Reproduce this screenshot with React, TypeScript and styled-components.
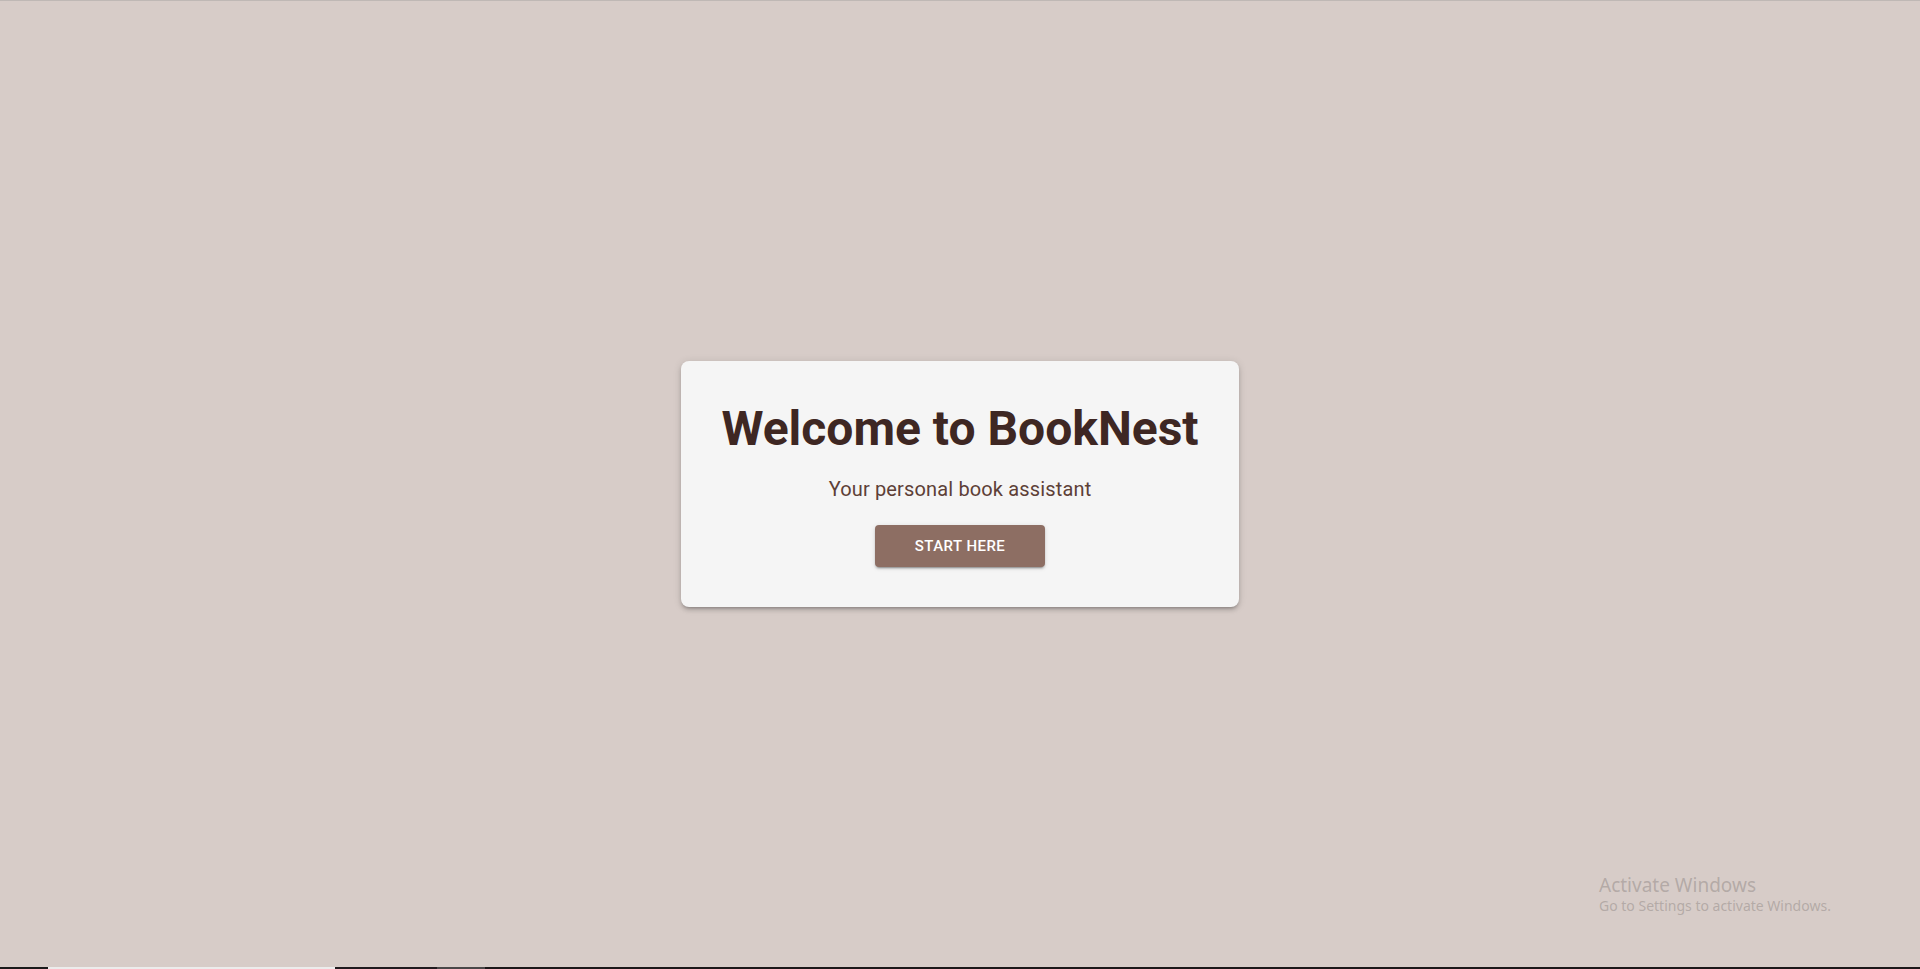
import styled, { createGlobalStyle } from "styled-components"

const GlobalStyle = createGlobalStyle`
  html, body, #root {
    margin: 0;
    padding: 0;
    height: 100%;
  }
  body {
    font-family: Roboto, "Liberation Sans", Arial, sans-serif;
    background: #d7ccc8;
  }
`

const Page = styled.div`
  height: 969px;
  display: flex;
  flex-direction: column;
  background: #d7ccc8;
  border-top: 1px solid #bfb8b5;
  box-sizing: border-box;
  position: relative;
  overflow: hidden;
`

const Main = styled.main`
  flex: 1;
  display: flex;
  align-items: center;
  justify-content: center;
`

const Card = styled.div`
  background: #f5f5f5;
  border-radius: 8px;
  padding: 40px;
  text-align: center;
  box-shadow: 0px 3px 3px -2px rgba(0, 0, 0, 0.2), 0px 3px 4px 0px rgba(0, 0, 0, 0.14),
    0px 1px 8px 0px rgba(0, 0, 0, 0.12);
`

const Title = styled.h1`
  margin: 0 0 16px;
  font-size: 48px;
  line-height: 56px;
  font-weight: 700;
  color: #3e2723;
`

const Subtitle = styled.p`
  margin: 0 0 20px;
  font-size: 20px;
  line-height: 32px;
  font-weight: 400;
  letter-spacing: 0.15px;
  color: #5d4037;
`

const StartButton = styled.button`
  height: 42px;
  padding: 0 40px;
  min-width: 170px;
  border: none;
  border-radius: 4px;
  background: #8d6e63;
  color: #fff;
  font-family: Roboto, "Liberation Sans", Arial, sans-serif;
  font-size: 15px;
  font-weight: 500;
  letter-spacing: 0.46px;
  text-transform: uppercase;
  cursor: pointer;
  box-shadow: 0px 3px 1px -2px rgba(0, 0, 0, 0.2), 0px 2px 2px 0px rgba(0, 0, 0, 0.14),
    0px 1px 5px 0px rgba(0, 0, 0, 0.12);
`

const Watermark = styled.div`
  position: absolute;
  left: 1599px;
  top: 872px;
  font-family: "Noto Sans", "Open Sans", sans-serif;
  color: rgba(150, 140, 138, 0.55);
  pointer-events: none;
`

const WatermarkTitle = styled.div`
  font-size: 19px;
  line-height: 24px;
`

const WatermarkText = styled.div`
  font-size: 14px;
  line-height: 18px;
`

const Taskbar = styled.div`
  height: 2px;
  display: flex;
  background: #1c1719;
`

const TaskSlot = styled.div<{ $w: number; $bg: string }>`
  width: ${(p) => p.$w}px;
  background: ${(p) => p.$bg};
`

export default function App() {
  return (
    <>
      <GlobalStyle />
      <Page>
        <Main>
          <Card>
            <Title>Welcome to BookNest</Title>
            <Subtitle>Your personal book assistant</Subtitle>
            <StartButton>Start Here</StartButton>
          </Card>
        </Main>
        <Watermark>
          <WatermarkTitle>Activate Windows</WatermarkTitle>
          <WatermarkText>Go to Settings to activate Windows.</WatermarkText>
        </Watermark>
        <Taskbar>
          <TaskSlot $w={48} $bg="#1a1a1a" />
          <TaskSlot $w={287} $bg="#ececec" />
          <TaskSlot $w={102} $bg="#201a1e" />
          <TaskSlot $w={48} $bg="#4a4748" />
        </Taskbar>
      </Page>
    </>
  )
}
